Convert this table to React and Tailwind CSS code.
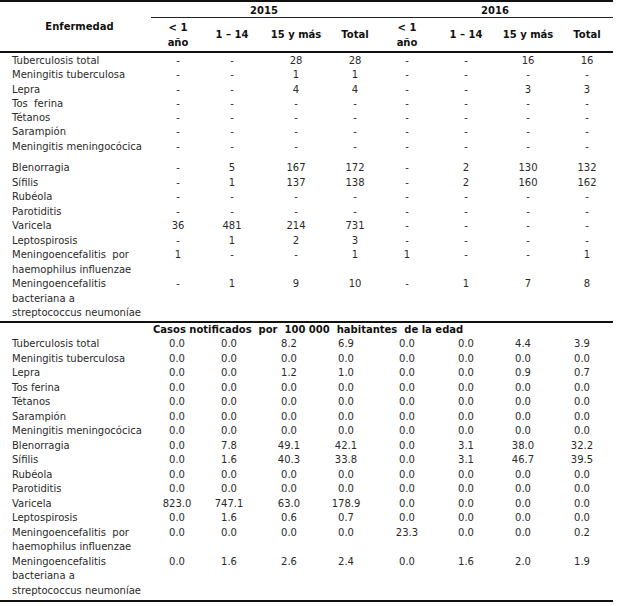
import React from "react";

const D = "-";
const dashes = [D, D, D, D, D, D, D, D];
const zeros = ["0.0", "0.0", "0.0", "0.0", "0.0", "0.0", "0.0", "0.0"];

const top1 = [
  [["Tuberculosis total"], ["-", "-", "28", "28", "-", "-", "16", "16"]],
  [["Meningitis tuberculosa"], ["-", "-", "1", "1", "-", "-", "-", "-"]],
  [["Lepra"], ["-", "-", "4", "4", "-", "-", "3", "3"]],
  [["Tos  ferina"], dashes],
  [["Tétanos"], dashes],
  [["Sarampión"], dashes],
  [["Meningitis meningocócica"], dashes],
];

const top2 = [
  [["Blenorragia"], ["-", "5", "167", "172", "-", "2", "130", "132"]],
  [["Sífilis"], ["-", "1", "137", "138", "-", "2", "160", "162"]],
  [["Rubéola"], dashes],
  [["Parotiditis"], dashes],
  [["Varicela"], ["36", "481", "214", "731", "-", "-", "-", "-"]],
  [["Leptospirosis"], ["-", "1", "2", "3", "-", "-", "-", "-"]],
  [["Meningoencefalitis  por", "haemophilus influenzae"], ["1", "-", "-", "1", "1", "-", "-", "1"]],
  [["Meningoencefalitis", "bacteriana a", "streptococcus neumoníae"], ["-", "1", "9", "10", "-", "1", "7", "8"]],
];

const bottom = [
  [["Tuberculosis total"], ["0.0", "0.0", "8.2", "6.9", "0.0", "0.0", "4.4", "3.9"]],
  [["Meningitis tuberculosa"], zeros],
  [["Lepra"], ["0.0", "0.0", "1.2", "1.0", "0.0", "0.0", "0.9", "0.7"]],
  [["Tos ferina"], zeros],
  [["Tétanos"], zeros],
  [["Sarampión"], zeros],
  [["Meningitis meningocócica"], zeros],
  [["Blenorragia"], ["0.0", "7.8", "49.1", "42.1", "0.0", "3.1", "38.0", "32.2"]],
  [["Sífilis"], ["0.0", "1.6", "40.3", "33.8", "0.0", "3.1", "46.7", "39.5"]],
  [["Rubéola"], zeros],
  [["Parotiditis"], zeros],
  [["Varicela"], ["823.0", "747.1", "63.0", "178.9", "0.0", "0.0", "0.0", "0.0"]],
  [["Leptospirosis"], ["0.0", "1.6", "0.6", "0.7", "0.0", "0.0", "0.0", "0.0"]],
  [["Meningoencefalitis  por", "haemophilus influenzae"], ["0.0", "0.0", "0.0", "0.0", "23.3", "0.0", "0.0", "0.2"]],
  [["Meningoencefalitis", "bacteriana a", "streptococcus neumoníae"], ["0.0", "1.6", "2.6", "2.4", "0.0", "1.6", "2.0", "1.9"]],
];

const TOPGRID = "grid grid-cols-[151px_54px_54px_74px_44px_60px_58px_66px_52px]";
const BOTGRID = "grid grid-cols-[151px_52px_52px_68px_46px_76px_42px_72px_46px]";

function Row({ label, vals, grid, lh }) {
  return (
    <div className={grid + " " + lh}>
      <div className="pl-3 whitespace-pre">
        {label.map((l, i) => (
          <div key={i}>{l}</div>
        ))}
      </div>
      {vals.map((v, i) => (
        <div key={i} className="text-center">
          {v}
        </div>
      ))}
    </div>
  );
}

export default function App() {
  return (
    <div
      className="w-[617px] h-[606px] bg-white text-[10px] text-[#2a2a2a]"
      style={{ fontFamily: '"DejaVu Sans", Verdana, sans-serif' }}
    >
      <div className="w-[613px]">
        <div className="h-[2px] bg-[#111]" />
        {/* header */}
        <div className="grid grid-cols-[151px_462px] border-b-2 border-[#111]">
          <div className="flex items-center justify-center pl-2 font-bold text-[#111] h-[49px]">
            Enfermedad
          </div>
          <div className="flex flex-col font-bold text-[#111]">
            <div className="grid grid-cols-[226px_236px] border-b border-[#222] h-[16px] leading-[16px] pt-px">
              <div className="text-center">2015</div>
              <div className="text-center">2016</div>
            </div>
            <div className="grid grid-cols-[54px_54px_74px_44px_60px_58px_66px_52px] flex-1 items-center leading-[15px]">
              <div className="text-center">
                &lt; 1
                <br />
                año
              </div>
              <div className="text-center">1 – 14</div>
              <div className="text-center">15 y más</div>
              <div className="text-center">Total</div>
              <div className="text-center">
                &lt; 1
                <br />
                año
              </div>
              <div className="text-center">1 – 14</div>
              <div className="text-center">15 y más</div>
              <div className="text-center">Total</div>
            </div>
          </div>
        </div>
        {/* top body */}
        <div className="pt-px">
          {top1.map(([l, v], i) => (
            <Row key={i} label={l} vals={v} grid={TOPGRID} lh="leading-[14.3px]" />
          ))}
        </div>
        <div className="h-[7px]" />
        <div className="border-b-2 border-[#111]">
          {top2.map(([l, v], i) => (
            <Row key={i} label={l} vals={v} grid={TOPGRID} lh="leading-[14.5px]" />
          ))}
        </div>
        {/* bottom */}
        <div className="leading-[14.5px]">
          <div className="grid grid-cols-[151px_462px] font-bold text-[#111]">
            <div />
            <div className="whitespace-pre pl-[2px]">Casos notificados  por  100 000  habitantes  de la edad</div>
          </div>
          {bottom.map(([l, v], i) => (
            <Row key={i} label={l} vals={v} grid={BOTGRID} lh="leading-[14.5px]" />
          ))}
        </div>
        <div className="h-[2px] bg-[#111] mt-[2px]" />
      </div>
    </div>
  );
}
